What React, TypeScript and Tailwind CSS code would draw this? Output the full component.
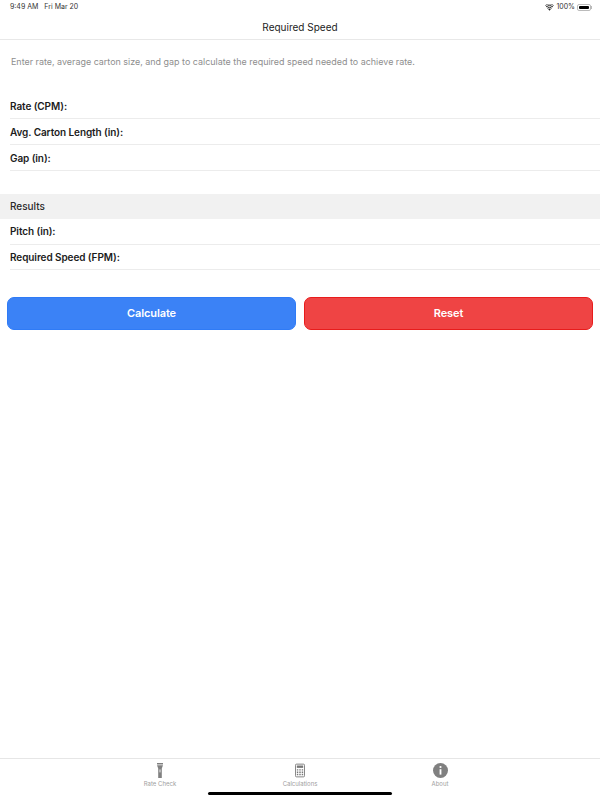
function Row({ label, h = "h-[26px]", pt = "" }: { label: string; h?: string; pt?: string }) {
  return (
    <div className={`ml-[10px] ${h} ${pt} border-b border-[#ececec] flex items-center`}>
      <span className="text-[10px] font-semibold tracking-[-0.08px] text-[#1c1c1c]">{label}</span>
    </div>
  );
}

export default function App() {
  return (
    <div className="w-[600px] h-[800px] bg-white flex flex-col font-['Inter','Liberation_Sans',sans-serif] overflow-hidden">
      <div className="h-[14px] flex items-center justify-between pl-[10px] pr-[8px] pt-[1px] text-[7px] text-[#333]">
        <div className="flex gap-[6px]">
          <span>9:49 AM</span>
          <span>Fri Mar 20</span>
        </div>
        <div className="flex items-center gap-[2px]">
          <svg width="9" height="7" viewBox="0 0 18 14">
            <path d="M9 13.5 6.2 10.2a4.2 4.2 0 0 1 5.6 0Z" fill="#222" />
            <path d="M4.6 8.4a6.8 6.8 0 0 1 8.8 0" stroke="#222" strokeWidth="2" fill="none" />
            <path d="M2.2 5.6a10.4 10.4 0 0 1 13.6 0" stroke="#222" strokeWidth="2" fill="none" />
            <path d="M.6 3.2a13 13 0 0 1 16.8 0" stroke="#222" strokeWidth="1.4" fill="none" />
          </svg>
          <span>100%</span>
          <div className="flex items-center">
            <div className="w-[14px] h-[7px] rounded-[2px] border border-[#bbb] p-[1px]">
              <div className="w-full h-full bg-black rounded-[1px]" />
            </div>
            <div className="w-[1px] h-[3px] bg-[#bbb]" />
          </div>
        </div>
      </div>

      <div className="h-[26px] pt-[1px] border-b border-[#e8e8e8] flex items-center justify-center text-[10px] text-[#222]">
        Required Speed
      </div>

      <div className="h-[42px] pl-[11px] pt-[1px] flex items-center text-[8.95px] text-[#8e8e8e]">
        Enter rate, average carton size, and gap to calculate the required speed needed to achieve rate.
      </div>

      <div className="mt-[11px]">
        <Row label="Rate (CPM):" pt="pt-[2px]" />
        <Row label="Avg. Carton Length (in):" pt="pt-[2px]" />
        <Row label="Gap (in):" pt="pt-[2px]" />
      </div>

      <div className="mt-[23px] h-[25px] bg-[#f1f1f1] pl-[10px] flex items-center text-[10px] font-medium text-[#2a2a2a]">
        Results
      </div>
      <div>
        <Row label="Pitch (in):" />
        <Row label="Required Speed (FPM):" h="h-[25px]" />
      </div>

      <div className="mt-[27px] px-[7px] flex gap-[8px]">
        <button className="flex-1 h-[33px] rounded-[7px] bg-[#3b82f6] border border-[#2f7bf6] text-white text-[11px] font-semibold tracking-[-0.1px]">
          Calculate
        </button>
        <button className="flex-1 h-[33px] rounded-[7px] bg-[#ef4444] border border-[#e81c1c] text-white text-[11px] font-semibold tracking-[-0.1px]">
          Reset
        </button>
      </div>

      <div className="flex-1" />

      <div className="relative h-[42px] border-t border-[#e6e6e6] flex justify-center gap-[82px] pt-[4px]">
        <div className="w-[58px] flex flex-col items-center">
          <svg width="6" height="15" viewBox="0 0 6 15">
            <path d="M0 0h6v1.5H0z" fill="#808080" />
            <path d="M0 2.2h6L4.8 5.6V15H1.2V5.6Z" fill="#808080" />
            <rect x="2.4" y="6.4" width="1.2" height="3" fill="#dcdcdc" />
          </svg>
          <span className="text-[6px] leading-[8px] text-[#a0a0a0] mt-[2px]">Rate Check</span>
        </div>
        <div className="w-[58px] flex flex-col items-center">
          <svg width="10" height="15" viewBox="0 0 11 15">
            <rect x="0.5" y="0.5" width="10" height="14" rx="1.2" fill="none" stroke="#777" />
            <rect x="2" y="2" width="7" height="2.6" fill="#777" />
            <path d="M2 6h1.6v1.6H2zM4.7 6h1.6v1.6H4.7zM7.4 6H9v1.6H7.4zM2 8.6h1.6v1.6H2zM4.7 8.6h1.6v1.6H4.7zM7.4 8.6H9v1.6H7.4zM2 11.2h1.6v1.6H2zM4.7 11.2h1.6v1.6H4.7zM7.4 11.2H9v1.6H7.4z" fill="#777" />
          </svg>
          <span className="text-[6px] leading-[8px] text-[#a0a0a0] mt-[2px]">Calculations</span>
        </div>
        <div className="w-[58px] flex flex-col items-center">
          <svg width="15" height="15" viewBox="0 0 15 15">
            <circle cx="7.5" cy="7.5" r="7.5" fill="#808080" />
            <rect x="6.6" y="6.2" width="1.8" height="5.4" fill="#fff" />
            <circle cx="7.5" cy="4" r="1.1" fill="#fff" />
          </svg>
          <span className="text-[6px] leading-[8px] text-[#a0a0a0] mt-[2px]">About</span>
        </div>
        <div className="absolute left-[208px] top-[33px] w-[184px] h-[3px] rounded-full bg-black" />
      </div>
    </div>
  );
}
